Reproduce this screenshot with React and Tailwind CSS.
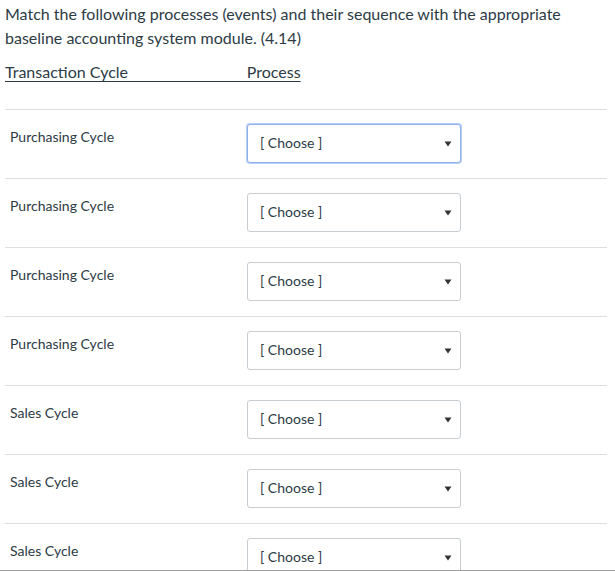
const ROWS = [
  'Purchasing Cycle',
  'Purchasing Cycle',
  'Purchasing Cycle',
  'Purchasing Cycle',
  'Sales Cycle',
  'Sales Cycle',
  'Sales Cycle',
]

function ChooseBox({ focused }) {
  return (
    <div
      className={`w-[214px] h-[39px] rounded-[3px] border bg-white flex items-center justify-between pl-[12px] pr-[8px] ${focused ? 'border-[#8fb1ee] shadow-[0_0_0_1px_#b9cff5]' : 'border-[#c7cdd1]'}`}
    >
      <span className="text-sm text-[#2d3b45] mb-[2px]">[ Choose ]</span>
      <svg width="8" height="6" viewBox="0 0 8 6">
        <path d="M0.5 0.5 L7.5 0.5 L4 5.5 Z" fill="#333" />
      </svg>
    </div>
  )
}

export default function App() {
  return (
    <div
      className="h-[571px] overflow-hidden bg-white text-[#2d3b45] border-b border-[#9e9e9e]"
      style={{ fontFamily: 'Lato, "Open Sans", sans-serif' }}
    >
      <div className="pl-[5px] pt-[2px]">
        <p className="text-base leading-6">
          Match the following processes (events) and their sequence with the appropriate baseline accounting system module. (4.14)
        </p>
        <p className="text-base leading-6 mt-[10px]">
          <span className="underline underline-offset-[3px] whitespace-pre">Transaction Cycle                             Process</span>
        </p>
      </div>

      {/* answer rows */}
      <div className="ml-[5px] w-[602px] mt-[25px]">
        {ROWS.map((label, i) => (
          <div key={i} className="h-[69px] border-t border-[#dcdfe1] flex">
            <div className="w-[242px] pl-[5px] pt-[18px] text-sm leading-[18px]">{label}</div>
            <div className="pt-[14px]">
              <ChooseBox focused={i === 0} />
            </div>
          </div>
        ))}
      </div>
    </div>
  )
}
